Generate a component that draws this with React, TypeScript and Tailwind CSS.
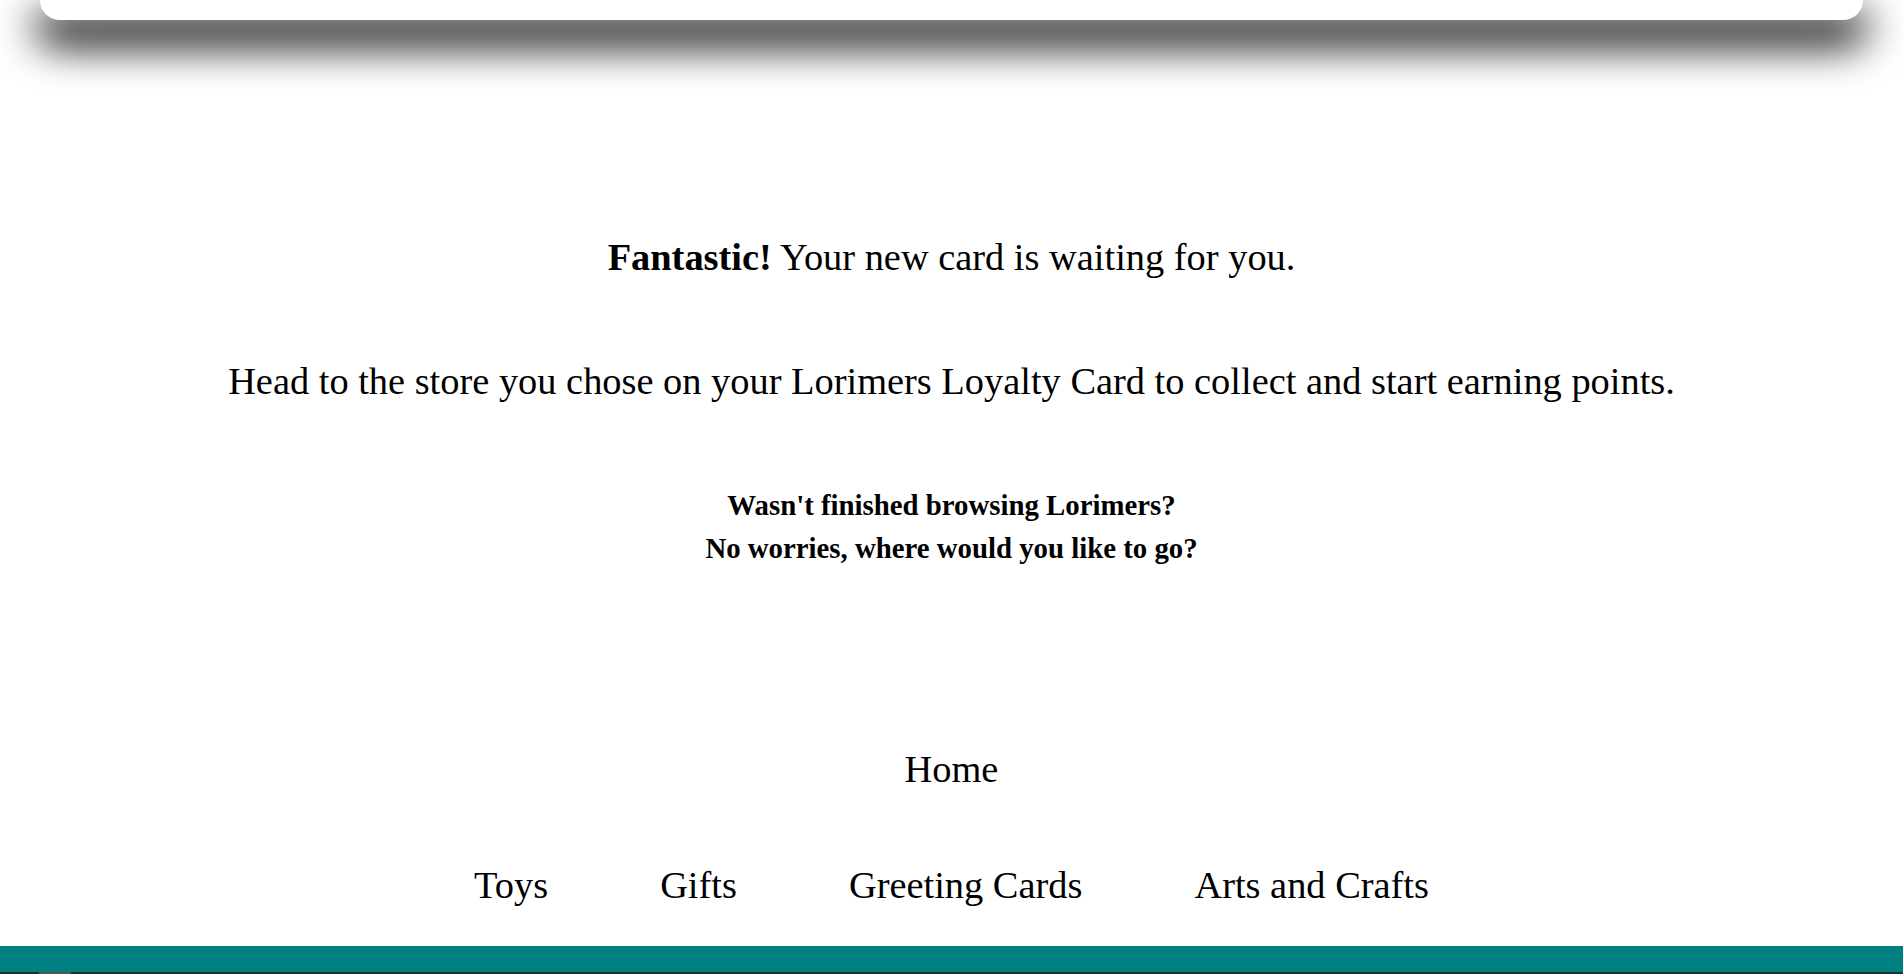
const NAV = ['Toys', 'Gifts', 'Greeting Cards', 'Arts and Crafts'];

export default function App() {
  return (
    <div className="min-h-[975px] bg-white text-black font-['Liberation_Serif','Times_New_Roman',serif] flex flex-col overflow-hidden">
      {/* header card, mostly scrolled off */}
      <div className="mx-[40px] h-[20px] bg-white rounded-b-[40px] shadow-[0_20px_42px_6px_rgba(0,0,0,1)] relative z-10" />

      <main className="flex flex-col items-center text-center">
        <p className="mt-[215px] text-[38.4px] leading-[44px]">
          <span className="font-bold">Fantastic!</span> Your new card is waiting for you.
        </p>
        <p className="mt-[80px] text-[38.4px] leading-[44px]">
          Head to the store you chose on your Lorimers Loyalty Card to collect and start earning points.
        </p>
        <div className="mt-[81px] text-[28.8px] leading-[43px] font-bold">
          <p>Wasn't finished browsing Lorimers?</p>
          <p>No worries, where would you like to go?</p>
        </div>

        <nav className="mt-[177px] flex flex-col items-center text-[38.4px] leading-[44px]">
          <a href="#" className="text-black no-underline">Home</a>
          <div className="mt-[72px] flex items-center gap-[112px]">
            {NAV.map((n) => (
              <a key={n} href="#" className="text-black no-underline">{n}</a>
            ))}
          </div>
        </nav>
      </main>

      <footer className="mt-[39px]">
        <div className="h-[26px] bg-[#008080]" />
        <div className="h-[2px] bg-[#1c3232] flex">
          <div className="ml-[39px] w-[32px] bg-[#555]" />
        </div>
      </footer>
    </div>
  );
}
